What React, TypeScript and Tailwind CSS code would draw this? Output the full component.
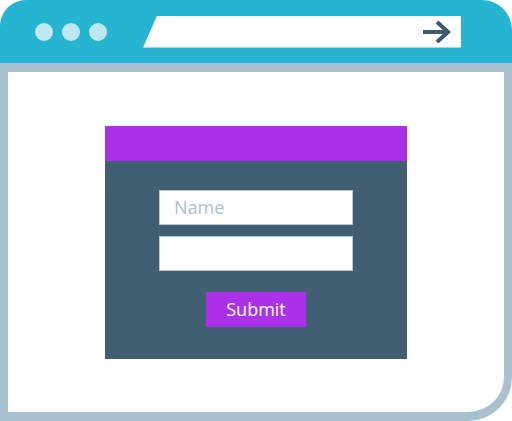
import { useState } from "react";

export default function App() {
  const [name, setName] = useState("");
  const [extra, setExtra] = useState("");

  return (
    <div className="w-[512px] h-[421px] flex flex-col font-['Open_Sans','Noto_Sans',sans-serif]">
      {/* Title bar */}
      <div className="h-[63px] shrink-0 bg-[#25B5D2] rounded-tl-[26px] rounded-tr-[30px] flex items-center pl-[35px]">
        <div className="flex items-center gap-[9px]">
          <div className="w-[18px] h-[18px] rounded-full bg-[#BDE8F1]" />
          <div className="w-[18px] h-[18px] rounded-full bg-[#BDE8F1]" />
          <div className="w-[18px] h-[18px] rounded-full bg-[#BDE8F1]" />
        </div>
        <div className="ml-[36px] w-[318px] h-[32px] bg-white flex items-center justify-end pr-[10px] [clip-path:polygon(14px_0,100%_0,100%_100%,0_100%)]">
          <svg width="28" height="24" viewBox="0 0 28 24" fill="none">
            <path d="M0 12 H25" stroke="#3F5A6E" strokeWidth="4" />
            <path d="M14 2 L25 12 L14 22" stroke="#3F5A6E" strokeWidth="4" />
          </svg>
        </div>
      </div>

      {/* Window body */}
      <div className="flex-1 bg-white border-[#A9C1CE] border-l-[8px] border-r-[8px] border-t-[9px] border-b-[9px] rounded-br-[44px] flex items-center justify-center">
        <div className="w-[302px] h-[233px] flex flex-col">
          <div className="h-[35px] bg-[#AA31E8]" />
          <div className="flex-1 bg-[#425E73] flex flex-col items-center pt-[29px]">
            <input
              value={name}
              onChange={(e) => setName(e.target.value)}
              placeholder="Name"
              className="w-[194px] h-[35px] bg-white border border-[#B9C8D2] px-[14px] text-[18px] text-[#425E73] placeholder-[#A9C1CE] outline-none"
            />
            <input
              value={extra}
              onChange={(e) => setExtra(e.target.value)}
              className="mt-[11px] w-[194px] h-[35px] bg-white border border-[#B9C8D2] px-[14px] text-[18px] text-[#425E73] outline-none"
            />
            <button className="mt-[21px] w-[100px] h-[35px] bg-[#AA31E8] text-white text-[18px] leading-none">
              Submit
            </button>
          </div>
        </div>
      </div>
    </div>
  );
}
